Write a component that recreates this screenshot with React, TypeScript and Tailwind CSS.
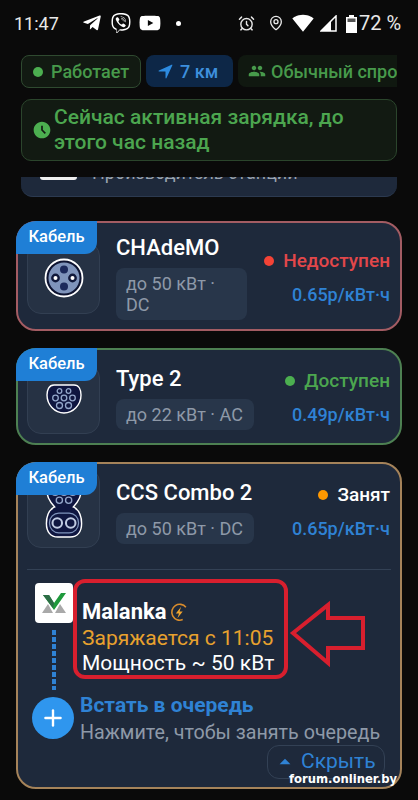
import { AlarmClock, MapPin, Plus } from "lucide-react";
import type { ReactNode } from "react";
import { FaTelegramPlane, FaViber, FaYoutube } from "react-icons/fa";
import { IoNavigate } from "react-icons/io5";
import { MdAccessTimeFilled, MdArrowDropUp, MdGroup, MdSignalWifi4Bar } from "react-icons/md";

const StatusBar = () => (
  <div className="flex h-[46px] items-center pl-[14px] pr-[5px] text-[20px] text-[#e8e8e8]">
    <span className="w-[68px] text-[18px]">11:47</span>
    <FaTelegramPlane size={20} className="text-white" />
    <FaViber size={20} className="ml-[9px] text-white" />
    <FaYoutube size={22} className="ml-[8px] text-white" />
    <span className="ml-[15px] h-[5px] w-[5px] rounded-full bg-white" />
    <AlarmClock size={17} className="ml-[57px]" />
    <MapPin size={16} className="ml-[13px]" />
    <MdSignalWifi4Bar size={22} className="ml-[8px] text-white" />
    <svg width="17" height="17" viewBox="0 0 17 17" className="ml-[6px]">
      <path d="M16 1V16H1Z" fill="none" stroke="#fff" strokeWidth="1.5" />
      <path d="M11 6V16H1L11 6Z" fill="#fff" />
    </svg>
    <svg width="11" height="19" viewBox="0 0 11 19" className="ml-[9px]">
      <path d="M3 1H8V3H11V19H0V3H3Z" fill="#fff" />
      <path d="M1.5 4.5H9.5V8H1.5Z" fill="#555" />
    </svg>
    <span className="ml-[2px]">72 %</span>
  </div>
);

const Chips = () => (
  <div className="mx-[21px] mt-[9px] flex gap-[5px] overflow-hidden text-[18px] font-medium">
    <div className="flex h-[33px] w-[120px] shrink-0 items-center gap-[8px] rounded-[8px] border border-[#2f4a30] bg-[#121a12] pl-[11px] text-[#479a4b]">
      <span className="h-[10px] w-[10px] rounded-full bg-[#4caf50]" />
      Работает
    </div>
    <div className="flex h-[32px] w-[87px] shrink-0 items-center gap-[6px] rounded-[8px] bg-[#0d2747] pl-[11px] text-[#3d8fdd]">
      <IoNavigate size={17} className="text-[#2d8be0]" />
      7 км
    </div>
    <div className="flex h-[32px] shrink-0 items-center gap-[5px] whitespace-nowrap rounded-[8px] bg-[#101810] pl-[10px] text-[#479a4b]">
      <MdGroup size={18} />
      Обычный спрос
    </div>
  </div>
);

const Banner = () => (
  <div className="mx-[21px] mt-[11px] flex h-[62px] items-center gap-[2px] rounded-[10px] border border-[#2b452c] bg-[#121a12] pl-[10px] text-[21px] font-medium leading-[25px] text-[#4ca64f]">
    <MdAccessTimeFilled size={20} className="shrink-0 text-[#4caf50]" />
    <span>
      Сейчас активная зарядка, до
      <br />
      этого час назад
    </span>
  </div>
);

const ScrolledCard = () => (
  <div className="mx-[21px] mt-[16px] flex h-[20px] items-start gap-[15px] overflow-hidden rounded-b-[12px] border-b border-[#2c3a50] bg-[#1e293b] pl-[19px]">
    <span className="h-[3px] w-[37px] rounded-b-[6px] bg-[#eee]" />
    <span className="-mt-[14px] whitespace-nowrap text-[18px] leading-[20px] text-[#9aa3ae]">Производитель станции</span>
  </div>
);

// значок разъёма на карточке
const ChademoIcon = () => (
  <svg width="40" height="40" viewBox="0 0 40 40">
    <circle cx="20" cy="20" r="18.5" fill="#0d1330" stroke="#fff" strokeWidth="1.8" />
    <circle cx="20" cy="20" r="15.5" fill="#7f94bb" />
    <circle cx="20" cy="11.5" r="4" fill="#1c2a5c" />
    <circle cx="20" cy="28.5" r="4" fill="#1c2a5c" />
    <circle cx="11.5" cy="20" r="4.4" fill="#10183a" />
    <circle cx="28.5" cy="20" r="4.4" fill="#10183a" />
    <circle cx="11.5" cy="20" r="2" fill="#fff" />
    <circle cx="28.5" cy="20" r="2" fill="#fff" />
  </svg>
);

const Type2Pins = () => (
  <g fill="none" stroke="#93a6ca" strokeWidth="1.3">
    <circle cx="13.5" cy="7" r="2.3" />
    <circle cx="22.5" cy="7" r="2.3" />
    <circle cx="9.5" cy="14" r="2.8" />
    <circle cx="18" cy="14" r="2.8" />
    <circle cx="26.5" cy="14" r="2.8" />
    <circle cx="13.5" cy="21.5" r="3" />
    <circle cx="22.5" cy="21.5" r="3" />
  </g>
);

const Type2Icon = () => (
  <svg width="36" height="30" viewBox="0 0 36 30">
    <path d="M8 1H28C33 1 35 6 35 11C35 21 27 29 18 29C9 29 1 21 1 11C1 6 3 1 8 1Z" fill="#0f1640" stroke="#fff" strokeWidth="1.4" />
    <Type2Pins />
  </svg>
);

const CcsIcon = () => (
  <svg width="38" height="60" viewBox="0 0 36 58">
    <path d="M6 1H30C33 1 35 4 35 10C35 19 30 25 27 28C33 31 35 36 35 44C35 52 31 57 24 57H12C5 57 1 52 1 44C1 36 3 31 9 28C6 25 1 19 1 10C1 4 3 1 6 1Z" fill="#0f1640" stroke="#fff" strokeWidth="1.4" />
    <Type2Pins />
    <rect x="4" y="34" width="28" height="19" rx="9" fill="none" stroke="#7f94bb" strokeWidth="1.2" />
    <circle cx="11.5" cy="43.5" r="4.6" fill="none" stroke="#c0cbe2" strokeWidth="2" />
    <circle cx="24.5" cy="43.5" r="4.6" fill="none" stroke="#c0cbe2" strokeWidth="2" />
  </svg>
);

type ConnectorProps = {
  name: string;
  power: ReactNode;
  status: string;
  price: string;
  icon: ReactNode;
  borderClass: string;
  dotClass: string;
  statusClass: string;
  boxClass: string;
  midClass: string;
  chipClass: string;
  rightClass: string;
  children?: ReactNode;
};

const ConnectorCard = (p: ConnectorProps) => (
  <div className={`relative mx-[16px] rounded-[20px] border-2 bg-[#1e293b] ${p.borderClass}`}>
    <div className="absolute -left-[2px] -top-[2px] flex h-[33px] w-[81px] items-center justify-center rounded-br-[12px] rounded-tl-[20px] bg-[#1f7fd6] text-[16.5px] font-medium text-white">
      Кабель
    </div>
    <div className="flex pl-[9px] pr-[10px]">
      <div className={`flex w-[73px] shrink-0 items-center justify-center rounded-[14px] border border-[#323f52] bg-[#263244] ${p.boxClass}`}>{p.icon}</div>
      <div className={`ml-[16px] min-w-0 flex-1 ${p.midClass}`}>
        <div className="text-[22px] font-medium leading-[30px] text-white">{p.name}</div>
        <div className={`mt-[5px] rounded-[8px] bg-[#28364a] px-[10px] py-[5px] text-[18px] leading-[21px] text-[#8e99a8] ${p.chipClass}`}>{p.power}</div>
      </div>
      <div className={`flex shrink-0 flex-col items-end whitespace-nowrap ${p.rightClass}`}>
        <div className={`flex items-center gap-[9px] text-[19px] font-medium leading-[24px] ${p.statusClass}`}>
          <span className={`h-[10px] w-[10px] rounded-full ${p.dotClass}`} />
          {p.status}
        </div>
        <div className="mt-[10px] text-[18px] font-medium leading-[24px] text-[#2f82d4]">{p.price}</div>
      </div>
    </div>
    {p.children}
  </div>
);

const LightningBadge = () => (
  <svg width="18" height="19" viewBox="0 0 17 17" className="ml-[3px]">
    <path d="M15 3.5A7.5 7.5 0 1 0 12 15.2" fill="none" stroke="#d98c2c" strokeWidth="1.5" />
    <path d="M10.5 3L5.5 9.5H8.5L7 14L12 7.5H9Z" fill="#f0a42e" />
  </svg>
);

const QueueSection = () => (
  <div className="mx-[9px] mt-[21px] border-t border-[#334155] pb-[8px]">
    <div className="flex pl-[8px] pt-[13px]">
      <div className="flex h-[40px] w-[38px] items-center justify-center rounded-[4px] bg-white">
        <svg width="26" height="22" viewBox="0 0 26 22">
          <path d="M1 21L7 12L12 21Z" fill="#a9a9a9" />
          <path d="M14 21L19 12L25 21Z" fill="#a9a9a9" />
          <path d="M2 3H8L13 11L20 1H25L13 18Z" fill="#1f9a3c" />
          <path d="M2 3H8L13 11L12 16Z" fill="#2d6d46" />
        </svg>
      </div>
      <div className="-mt-[4px] h-[100px] w-[215px] rounded-[12px] border-4 border-[#d81f2e] pl-[5px] pt-[16px]">
        <div className="flex items-center text-[22px] font-bold leading-[26px] text-white">
          Malanka
          <LightningBadge />
        </div>
        <div className="whitespace-nowrap text-[21px] leading-[26px] text-[#e8a12e]">Заряжается с 11:05</div>
        <div className="whitespace-nowrap text-[21px] leading-[24px] text-white">Мощность ~ 50 кВт</div>
      </div>
    </div>
    <div className="ml-[25px] -mt-[49px] h-[60px] w-[4px] bg-[repeating-linear-gradient(to_bottom,#2f82d4_0,#2f82d4_5px,transparent_5px,transparent_7px)]" />
    <div className="flex pl-[5px]">
      <div className="mt-[7px] flex h-[42px] w-[42px] shrink-0 items-center justify-center rounded-full bg-[#2f96ee] text-white">
        <Plus size={26} strokeWidth={2.2} />
      </div>
      <div className="ml-[6px] pt-[2px]">
        <div className="text-[21px] font-bold leading-[26px] text-[#2f82d4]">Встать в очередь</div>
        <div className="mt-[3px] whitespace-nowrap text-[19.7px] leading-[24px] text-[#8e99a8]">Нажмите, чтобы занять очередь</div>
      </div>
    </div>
    <div className="mr-[6px] flex justify-end">
      <div className="flex h-[34px] w-[118px] items-center gap-[3px] rounded-[12px] border border-[#334155] pl-[4px] text-[21px] text-[#2f82d4]">
        <MdArrowDropUp size={26} />
        Скрыть
      </div>
    </div>
  </div>
);

const App = () => (
  <div className="relative h-[800px] w-[418px] overflow-hidden bg-[#0a0a0a] font-['Roboto',sans-serif]">
    <StatusBar />
    <Chips />
    <Banner />
    <ScrolledCard />
    <div className="mt-[24px]">
      <ConnectorCard
        name="CHAdeMO"
        power="до 50 кВт · DC"
        status="Недоступен"
        price="0.65р/кВт·ч"
        icon={<ChademoIcon />}
        borderClass="border-[#a35c63]"
        dotClass="bg-[#f44336]"
        statusClass="text-[#e2474a]"
        boxClass="mt-[19px] h-[72px] mb-[15px]"
        midClass="pt-[10px]"
        chipClass="w-[131px]"
        rightClass="pt-[26px]"
      />
    </div>
    <div className="mt-[17px]">
      <ConnectorCard
        name="Type 2"
        power="до 22 кВт · AC"
        status="Доступен"
        price="0.49р/кВт·ч"
        icon={<Type2Icon />}
        borderClass="border-[#4d8052]"
        dotClass="bg-[#4caf50]"
        statusClass="text-[#4ca64f]"
        boxClass="mt-[14px] h-[70px] mb-[9px]"
        midClass="pt-[14px]"
        chipClass="w-[138px] whitespace-nowrap"
        rightClass="pt-[19px]"
      />
    </div>
    <div className="mt-[17px]">
      <ConnectorCard
        name="CCS Combo 2"
        power="до 50 кВт · DC"
        status="Занят"
        price="0.65р/кВт·ч"
        icon={<CcsIcon />}
        borderClass="border-[#a5835a]"
        dotClass="bg-[#ff9800]"
        statusClass="text-white"
        boxClass="mt-[4px] h-[80px]"
        midClass="pt-[14px]"
        chipClass="w-[138px] whitespace-nowrap"
        rightClass="pt-[19px]"
      >
        <QueueSection />
      </ConnectorCard>
    </div>
    {/* красная стрелка поверх скриншота */}
    <svg width="80" height="70" viewBox="0 0 80 70" className="absolute left-[288px] top-[600px]">
      <path d="M5 33L40 5V18H75V48H40V63Z" fill="none" stroke="#d81f2e" strokeWidth="4" />
    </svg>
    <div className="absolute left-[289px] top-[771px] font-['DejaVu_Sans',sans-serif] text-[11.6px] font-bold leading-[16px] text-white">forum.onliner.by</div>
  </div>
);

export default App;
